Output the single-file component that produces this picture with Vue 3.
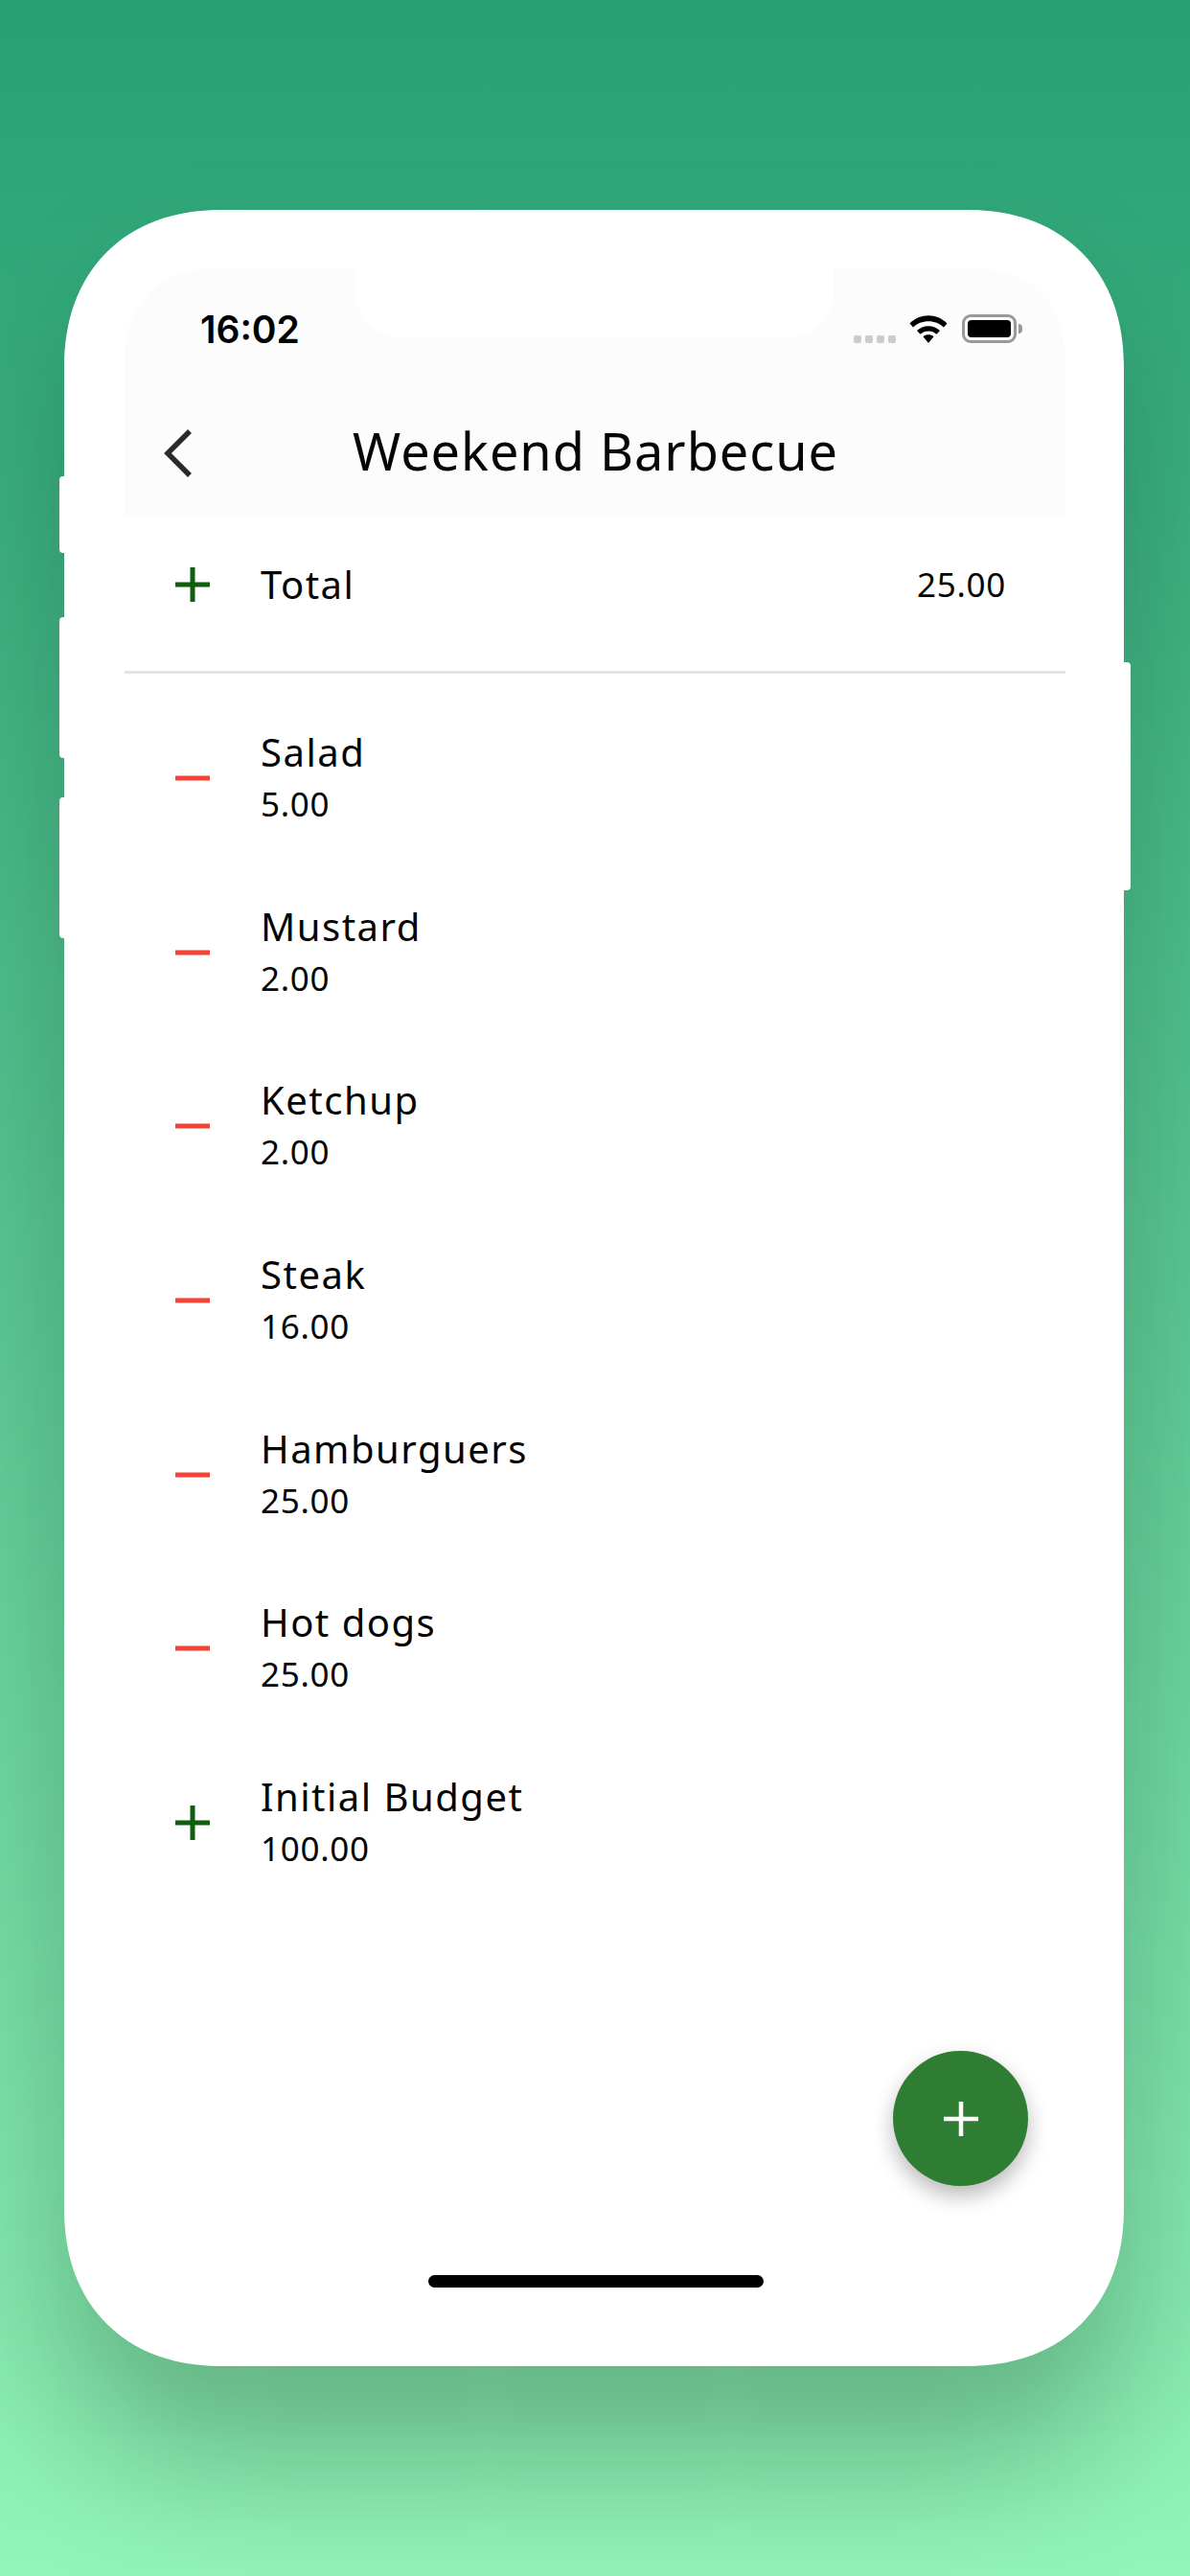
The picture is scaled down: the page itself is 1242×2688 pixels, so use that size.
<script setup>
const items = [
  { name: 'Salad', value: '5.00', type: 'out' },
  { name: 'Mustard', value: '2.00', type: 'out' },
  { name: 'Ketchup', value: '2.00', type: 'out' },
  { name: 'Steak', value: '16.00', type: 'out' },
  { name: 'Hamburguers', value: '25.00', type: 'out' },
  { name: 'Hot dogs', value: '25.00', type: 'out' },
  { name: 'Initial Budget', value: '100.00', type: 'in' }
]
</script>

<template>
  <div class="page">
    <div class="phone">
      <span class="side-btn mute"></span>
      <span class="side-btn vol-up"></span>
      <span class="side-btn vol-down"></span>
      <span class="side-btn power"></span>

      <div class="screen">
        <header class="header">
          <div class="notch"></div>
          <div class="status">
            <span class="time">16:02</span>
            <div class="status-icons">
              <div class="dots"><i></i><i></i><i></i><i></i></div>
              <svg class="wifi" width="40" height="30" viewBox="0 0 40 30">
                <path d="M0.5 9.5C11 -1.5 29 -1.5 39.5 9.5L36 13.5C27.5 5 12.5 5 4 13.5Z" fill="#000" />
                <path d="M8 17C14.5 10.5 25.5 10.5 32 17L28.5 20.8C24 16.3 16 16.3 11.5 20.8Z" fill="#000" />
                <path d="M14.5 23.2C17.5 20.6 22.5 20.6 25.5 23.2L20 30Z" fill="#000" />
              </svg>
              <div class="battery"><span class="level"></span></div>
            </div>
          </div>
          <div class="nav">
            <svg class="back" width="30" height="50" viewBox="0 0 30 50">
              <path d="M27 2L4 25L27 48" fill="none" stroke="#2a2a2a" stroke-width="5.5" />
            </svg>
            <h1 class="title">Weekend Barbecue</h1>
          </div>
        </header>

        <div class="total">
          <svg class="sign" width="36" height="36" viewBox="0 0 36 36">
            <path d="M0 18H36M18 0V36" stroke="#0f5f0f" stroke-width="5" />
          </svg>
          <span class="total-label">Total</span>
          <span class="total-value">25.00</span>
        </div>

        <ul class="list">
          <li v-for="item in items" :key="item.name" class="row">
            <svg v-if="item.type === 'in'" class="sign" width="36" height="36" viewBox="0 0 36 36">
              <path d="M0 18H36M18 0V36" stroke="#0f5f0f" stroke-width="5" />
            </svg>
            <svg v-else class="sign" width="36" height="36" viewBox="0 0 36 36">
              <path d="M0 18H36" stroke="#f44336" stroke-width="5" />
            </svg>
            <div class="texts">
              <div class="name">{{ item.name }}</div>
              <div class="value">{{ item.value }}</div>
            </div>
          </li>
        </ul>
      </div>

      <button class="fab">
        <svg width="36" height="36" viewBox="0 0 36 36">
          <path d="M0 18H36M18 0V36" stroke="#fff" stroke-width="4.5" />
        </svg>
      </button>
      <div class="home-bar"></div>
    </div>
  </div>
</template>

<style scoped>
.page {
  width: 1242px;
  height: 2688px;
  box-sizing: border-box;
  padding: 219px 69px 0 67px;
  background: linear-gradient(180deg, #27a074 0%, #92f5b8 100%);
  overflow: hidden;
  font-family: "Noto Sans", sans-serif;
  color: #050505;
}

.phone {
  position: relative;
  height: 2250px;
  background: #fff;
  border-radius: 165px;
  corner-shape: superellipse(1.15);
  box-shadow: 0 100px 150px rgba(0, 30, 10, 0.28);
  padding: 61px 61px 0 63px;
  box-sizing: border-box;
}

.side-btn {
  position: absolute;
  width: 10px;
  background: #fff;
  border-radius: 4px;
}

.mute { left: -5px; top: 278px; height: 80px; }
.vol-up { left: -5px; top: 425px; height: 147px; }
.vol-down { left: -5px; top: 613px; height: 147px; }
.power { right: -7px; top: 472px; height: 238px; }

.header {
  position: relative;
  height: 260px;
  background: #fcfcfc;
  border-radius: 95px 95px 0 0;
  corner-shape: superellipse(1.15);
}

.notch {
  position: absolute;
  left: 241px;
  top: 0;
  width: 499px;
  height: 73px;
  background: #fff;
  border-radius: 0 0 50px 50px;
}

.status {
  position: relative;
  height: 126px;
  display: flex;
  align-items: center;
  justify-content: space-between;
  padding: 0 51px 0 79px;
}

.time {
  font-family: Inter, sans-serif;
  font-size: 39px;
  font-weight: 600;
  color: #000;
}

.status-icons {
  display: flex;
  align-items: flex-start;
  height: 30px;
}

.dots {
  display: flex;
  gap: 4px;
  margin: 22px 14px 0 0;
}

.dots i {
  width: 8px;
  height: 8px;
  border-radius: 2px;
  background: #ccc;
}

.wifi {
  margin-right: 15px;
}

.battery {
  position: relative;
  width: 57px;
  height: 30px;
  box-sizing: border-box;
  border: 3px solid #999;
  border-radius: 9px;
  padding: 3px;
}

.battery::after {
  content: "";
  position: absolute;
  right: -9px;
  top: 7px;
  width: 4px;
  height: 10px;
  background: #999;
  border-radius: 0 4px 4px 0;
}

.level {
  display: block;
  height: 100%;
  background: #000;
  border-radius: 4px;
}

.nav {
  height: 134px;
  display: flex;
  align-items: center;
  padding-left: 41px;
}

.back {
  flex: none;
}

.title {
  margin: 0 0 6px 167px;
  font-size: 54px;
  font-weight: 400;
  letter-spacing: 1px;
  white-space: nowrap;
}

.total {
  height: 163px;
  box-sizing: border-box;
  display: flex;
  align-items: center;
  padding: 0 62px 21px 53px;
  border-bottom: 3px solid #e4e4e4;
}

.sign {
  flex: none;
}

.total-label {
  margin-left: 53px;
  font-size: 40px;
  letter-spacing: 1.5px;
}

.total-value {
  margin-left: auto;
  font-size: 35px;
  letter-spacing: 0.7px;
}

.list {
  list-style: none;
  margin: 0;
  padding: 18px 0 0 53px;
}

.row {
  height: 181.7px;
  display: flex;
  align-items: center;
}

.texts {
  margin-left: 53px;
}

.name {
  font-size: 40px;
  line-height: 54px;
  letter-spacing: 1.5px;
}

.value {
  font-size: 35px;
  line-height: 54px;
  letter-spacing: 0.7px;
}

.fab {
  position: absolute;
  right: 100px;
  bottom: 188px;
  width: 141px;
  height: 141px;
  padding: 0;
  border: none;
  border-radius: 50%;
  background: #2e7d32;
  box-shadow: 0 10px 22px rgba(0, 0, 0, 0.28);
  display: flex;
  align-items: center;
  justify-content: center;
}

.home-bar {
  position: absolute;
  left: 380px;
  bottom: 82px;
  width: 350px;
  height: 13px;
  border-radius: 7px;
  background: #000;
}
</style>

<style>
html, body {
  margin: 0;
}
</style>
